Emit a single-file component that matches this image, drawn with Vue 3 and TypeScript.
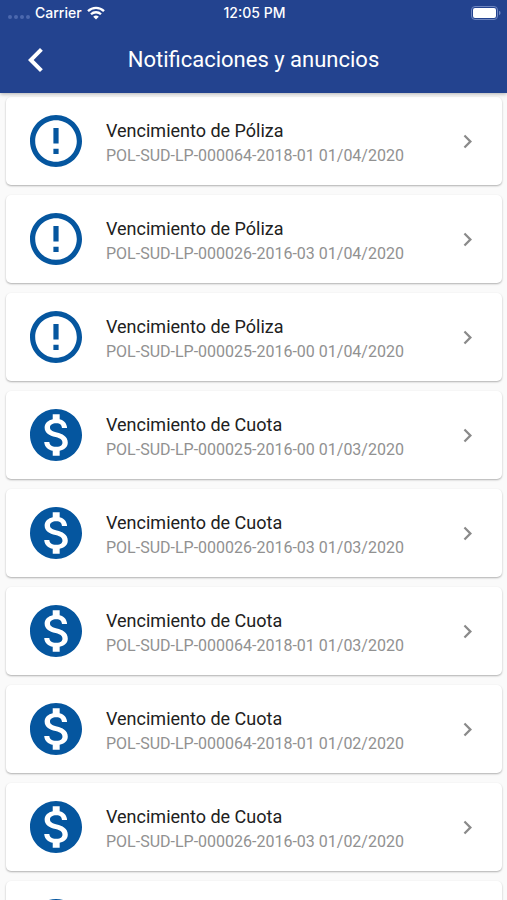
<script setup lang="ts">
type Kind = 'policy' | 'payment'

interface Notice {
  id: number
  kind: Kind
  policy: string
  date: string
}

const titles: Record<Kind, string> = {
  policy: 'Vencimiento de Póliza',
  payment: 'Vencimiento de Cuota',
}

const icons: Record<Kind, string> = {
  policy:
    'M11 15h2v2h-2zm0-8h2v6h-2zm.99-5C6.47 2 2 6.48 2 12s4.47 10 9.99 10C17.52 22 22 17.52 22 12S17.52 2 11.99 2zM12 20c-4.42 0-8-3.58-8-8s3.58-8 8-8 8 3.58 8 8-3.58 8-8 8z',
  payment:
    'M12 2C6.48 2 2 6.48 2 12s4.48 10 10 10 10-4.48 10-10S17.52 2 12 2zm1.41 16.09V20h-2.67v-1.93c-1.71-.36-3.16-1.46-3.27-3.4h1.96c.1 1.05.82 1.87 2.65 1.87 1.96 0 2.4-.98 2.4-1.59 0-.83-.44-1.61-2.67-2.14-2.48-.6-4.18-1.62-4.18-3.67 0-1.72 1.39-2.84 3.11-3.21V4h2.67v1.95c1.86.45 2.79 1.86 2.85 3.39H14.3c-.05-1.11-.64-1.87-2.22-1.87-1.5 0-2.4.68-2.4 1.64 0 .84.65 1.39 2.67 1.91s4.18 1.39 4.18 3.91c-.01 1.83-1.38 2.83-3.12 3.16z',
}

const notices: Notice[] = [
  { id: 1, kind: 'policy', policy: 'POL-SUD-LP-000064-2018-01', date: '01/04/2020' },
  { id: 2, kind: 'policy', policy: 'POL-SUD-LP-000026-2016-03', date: '01/04/2020' },
  { id: 3, kind: 'policy', policy: 'POL-SUD-LP-000025-2016-00', date: '01/04/2020' },
  { id: 4, kind: 'payment', policy: 'POL-SUD-LP-000025-2016-00', date: '01/03/2020' },
  { id: 5, kind: 'payment', policy: 'POL-SUD-LP-000026-2016-03', date: '01/03/2020' },
  { id: 6, kind: 'payment', policy: 'POL-SUD-LP-000064-2018-01', date: '01/03/2020' },
  { id: 7, kind: 'payment', policy: 'POL-SUD-LP-000064-2018-01', date: '01/02/2020' },
  { id: 8, kind: 'payment', policy: 'POL-SUD-LP-000026-2016-03', date: '01/02/2020' },
  { id: 9, kind: 'payment', policy: 'POL-SUD-LP-000025-2016-00', date: '01/02/2020' },
]
</script>

<template>
  <div class="screen">
    <header class="top">
      <div class="status">
        <div class="carrier">
          <span class="signal"><i v-for="n in 4" :key="n"></i></span>
          <span>Carrier</span>
          <svg class="wifi" viewBox="0 0 18 14" aria-hidden="true">
            <g fill="none" stroke="currentColor" stroke-width="2.3">
              <path d="M1 5.1a11.4 11.4 0 0 1 16 0" />
              <path d="M4 8.3a7.1 7.1 0 0 1 10 0" />
            </g>
            <path d="M9 13.6 6.2 10.8a4 4 0 0 1 5.6 0z" fill="currentColor" />
          </svg>
        </div>
        <span class="clock">12:05 PM</span>
        <svg class="battery" viewBox="0 0 30 14" aria-hidden="true">
          <rect x=".5" y=".5" width="26" height="13" rx="3.5" fill="none" stroke="#6f86c0" />
          <rect x="2" y="2" width="23" height="10" rx="2" fill="#fff" />
          <path d="M28 4.8q1.6.6 1.6 2.2T28 9.2z" fill="#6f86c0" />
        </svg>
      </div>
      <nav class="bar">
        <button class="back" type="button" aria-label="Atrás">
          <svg viewBox="0 0 24 24" aria-hidden="true">
            <path d="M15.41 7.41 14 6l-6 6 6 6 1.41-1.41L10.83 12z" />
          </svg>
        </button>
        <h1>Notificaciones y anuncios</h1>
      </nav>
    </header>
    <main>
      <ul class="list">
        <li v-for="notice in notices" :key="notice.id">
          <a class="card" href="#">
            <svg class="kind" viewBox="2 2 20 20" aria-hidden="true">
              <path :d="icons[notice.kind]" />
            </svg>
            <span class="text">
              <span class="title">{{ titles[notice.kind] }}</span>
              <span class="detail">{{ notice.policy }} {{ notice.date }}</span>
            </span>
            <svg class="chevron" viewBox="0 0 24 24" aria-hidden="true">
              <path d="M10 6 8.59 7.41 13.17 12l-4.58 4.59L10 18l6-6z" />
            </svg>
          </a>
        </li>
      </ul>
    </main>
  </div>
</template>

<style>
body {
  margin: 0;
  background: #fafafa;
}
</style>

<style scoped>
.screen {
  height: 100vh;
  display: flex;
  flex-direction: column;
  overflow: hidden;
  font-family: Roboto, 'Noto Sans', sans-serif;
}

.top {
  flex: none;
  position: relative;
  background: #23438f;
  color: #fff;
  box-shadow: 0 1px 4px rgba(0, 0, 0, 0.3);
}

.status {
  display: grid;
  grid-template-columns: 1fr auto 1fr;
  align-items: center;
  height: 26px;
  padding: 0 6px 0 8px;
  font: 500 14px/26px Inter, sans-serif;
}

.carrier {
  display: flex;
  align-items: center;
  gap: 5px;
}

.signal {
  display: flex;
  gap: 2px;
  padding-top: 8px;
}

.signal i {
  width: 4px;
  height: 4px;
  border-radius: 50%;
  background: #4c68ae;
}

.wifi {
  width: 18px;
  height: 14px;
}

.battery {
  justify-self: end;
  width: 30px;
  height: 14px;
}

.bar {
  display: grid;
  grid-template-columns: 72px 1fr 72px;
  align-items: center;
  height: 67px;
}

.back {
  display: flex;
  justify-content: center;
  padding: 0;
  border: 0;
  background: none;
  color: inherit;
  cursor: pointer;
}

.back svg {
  width: 48px;
  height: 48px;
  fill: currentColor;
}

h1 {
  margin: 0;
  font-size: 22px;
  line-height: 32px;
  font-weight: 400;
  text-align: center;
}

main {
  flex: 1;
  min-height: 0;
  overflow: hidden;
}

.list {
  display: flex;
  flex-direction: column;
  gap: 10px;
  margin: 0;
  padding: 4px 5px 4px 6px;
  list-style: none;
}

.card {
  display: flex;
  align-items: center;
  box-sizing: border-box;
  height: 88px;
  padding: 0 21px 0 24px;
  border-radius: 5px;
  background: #fff;
  box-shadow: 0 1px 2px rgba(0, 0, 0, 0.3);
  color: #212121;
  text-decoration: none;
}

.kind {
  flex: none;
  width: 52px;
  height: 52px;
  margin-right: 24px;
  fill: #05569f;
}

.text {
  flex: 1;
  min-width: 0;
  display: flex;
  flex-direction: column;
  padding-top: 4px;
}

.title {
  font-size: 18px;
  line-height: 26px;
}

.detail {
  color: #919191;
  font-size: 16px;
  line-height: 24px;
}

.chevron {
  flex: none;
  width: 27px;
  height: 27px;
  fill: #8a8a8a;
}
</style>
